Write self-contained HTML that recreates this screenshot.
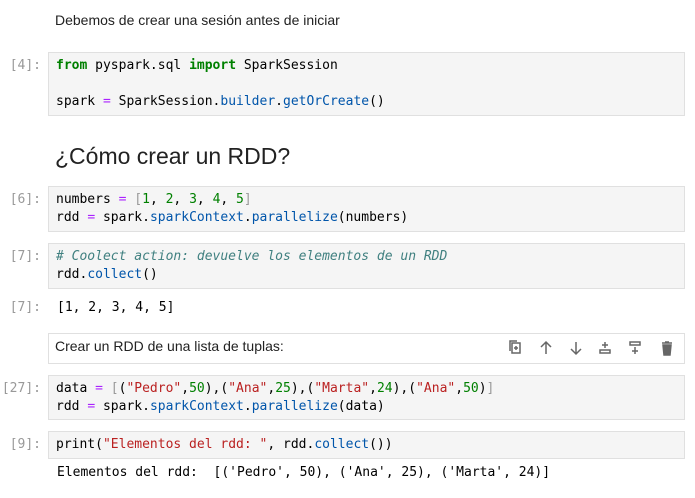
<!DOCTYPE html>
<html><head><meta charset="utf-8"><style>
body{margin:0;width:695px;height:498px;background:#fff;position:relative;overflow:hidden;font-family:"Liberation Sans",sans-serif;}
.box{position:absolute;left:48px;width:637px;background:#f5f5f5;border:1px solid #e0e0e0;padding:4px 0 4px 7px;box-sizing:border-box;}
.code{font-family:"DejaVu Sans Mono","Liberation Mono",monospace;font-size:13px;line-height:18px;white-space:pre;color:#000;}
.p{position:absolute;left:0;width:41px;text-align:right;font-family:"DejaVu Sans Mono",monospace;font-size:13px;color:#999;line-height:18px;}
.k{color:#008000;font-weight:bold}.o{color:#aa22ff}.f{color:#0055aa}.n{color:#008000}.s{color:#ba2121}.c{color:#408080;font-style:italic}.b{color:#999}
.md{position:absolute;font-size:14px;color:#222;}
.out{position:absolute;left:57px;}
svg{position:absolute;}
</style></head><body>
<div class="md" style="left:55px;top:12px;">Debemos de crear una sesión antes de iniciar</div>

<div class="p" style="top:57px">[4]:</div>
<div class="box code" style="top:52px;height:64px"><span class="k">from</span> pyspark.sql <span class="k">import</span> SparkSession

spark <span class="o">=</span> SparkSession<span>.</span><span class="f">builder</span>.<span class="f">getOrCreate</span>()</div>

<div class="md" style="left:55px;top:143px;font-size:23px;color:#222">¿Cómo crear un RDD?</div>

<div class="p" style="top:191px">[6]:</div>
<div class="box code" style="top:186px;height:46px">numbers <span class="o">=</span> <span class="b">[</span><span class="n">1</span>, <span class="n">2</span>, <span class="n">3</span>, <span class="n">4</span>, <span class="n">5</span><span class="b">]</span>
rdd <span class="o">=</span> spark.<span class="f">sparkContext</span>.<span class="f">parallelize</span>(numbers)</div>

<div class="p" style="top:248px">[7]:</div>
<div class="box code" style="top:243px;height:46px"><span class="c"># Coolect action: devuelve los elementos de un RDD</span>
rdd.<span class="f">collect</span>()</div>

<div class="p" style="top:299px">[7]:</div>
<div class="out code" style="top:299px">[1, 2, 3, 4, 5]</div>

<div class="box" style="top:333px;height:31px;background:#fff;padding:0"></div>
<div class="md" style="left:55px;top:338px">Crear un RDD de una lista de tuplas:</div>
<svg style="left:505px;top:337px" width="175" height="22" viewBox="0 0 175 22" fill="none" stroke="#666" stroke-width="1.5">
<rect x="7" y="6" width="8" height="10"/><path d="M5 14V4h7"/><path d="M11 9v4M9 11h4"/>
<path d="M41 17V5M36 10l5-5 5 5"/>
<path d="M71 5v12M66 12l5 5 5-5"/>
<path d="M95 16h10v-3H95zM100 5v6M97 8h6"/>
<path d="M125 5h10v3h-10zM130 10v7M127 14h6"/>
<path d="M158 8h8l-1 10h-6zM157 6h10M160 5h4" fill="#666"/>
</svg>

<div class="p" style="top:380px">[27]:</div>
<div class="box code" style="top:375px;height:45px">data <span class="o">=</span> <span class="b">[</span>(<span class="s">"Pedro"</span>,<span class="n">50</span>),(<span class="s">"Ana"</span>,<span class="n">25</span>),(<span class="s">"Marta"</span>,<span class="n">24</span>),(<span class="s">"Ana"</span>,<span class="n">50</span>)<span class="b">]</span>
rdd <span class="o">=</span> spark.<span class="f">sparkContext</span>.<span class="f">parallelize</span>(data)</div>

<div class="p" style="top:436px">[9]:</div>
<div class="box code" style="top:431px;height:28px">print(<span class="s">"Elementos del rdd: "</span>, rdd.<span class="f">collect</span>())</div>

<div class="out code" style="top:464px">Elementos del rdd:  [('Pedro', 50), ('Ana', 25), ('Marta', 24)]</div>
</body></html>
